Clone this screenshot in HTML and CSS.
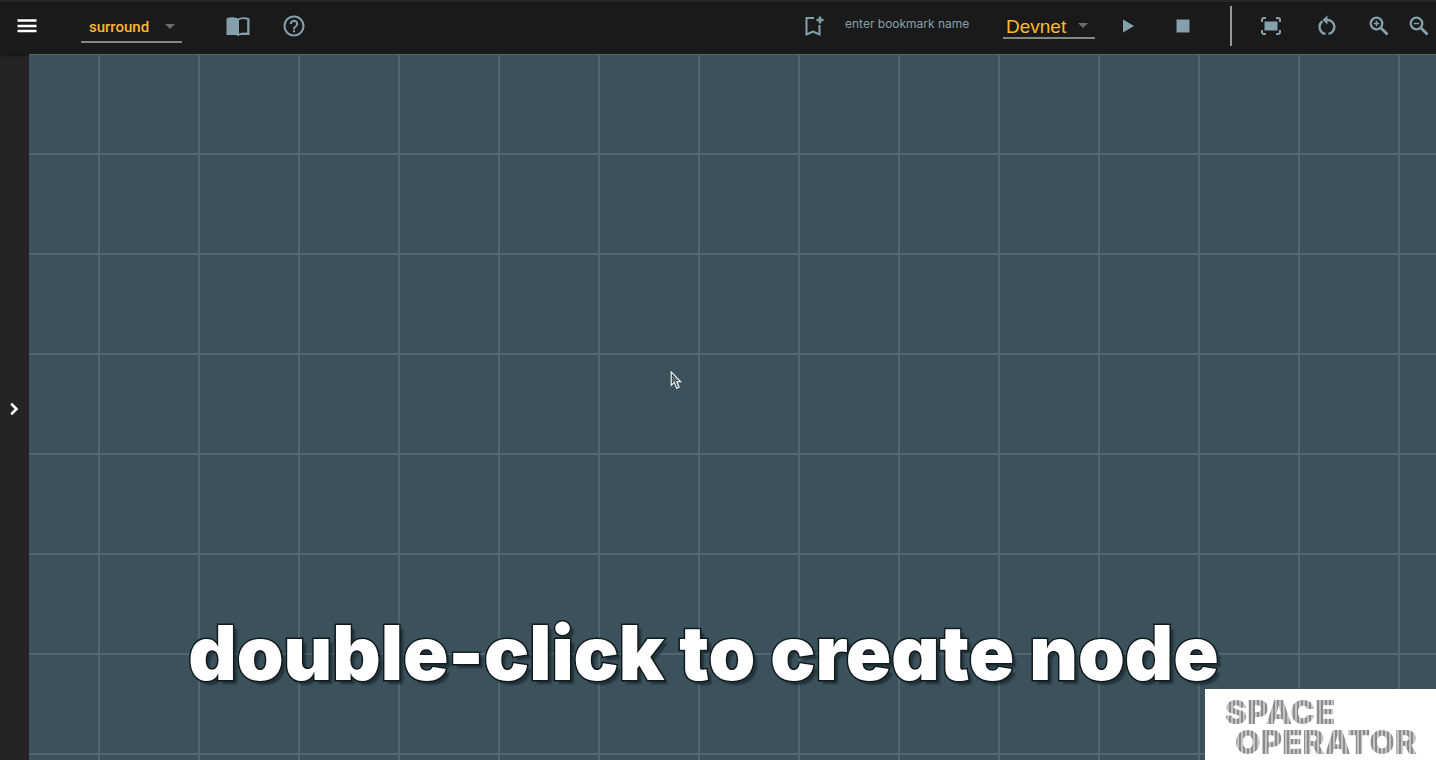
FILE: index.html
```
<!DOCTYPE html>
<html lang="en">
<head>
<meta charset="utf-8">
<title>Space Operator</title>
<link rel="stylesheet" href="styles.css">
</head>
<body>
<header class="toolbar">
  <div class="group group-left">
    <button class="icon menu" aria-label="Menu"><svg viewBox="0 0 24 24"><path d="M2.500 6.500h19M2.500 12h19M2.500 17h19" fill="none" stroke="currentColor" stroke-width="2.600"/></svg></button>
    <label class="pick pick-flow"><select aria-label="Flow"><option>surround</option></select></label>
    <button class="icon" aria-label="Documentation"><svg viewBox="0 0 24 24"><path fill-rule="evenodd" d="M0.500 4.500Q6 1.800 12 4.500Q18 1.800 23.500 4.500V21H15Q13 21 12 22Q11 21 9 21H.5ZM13 6V19.500Q17 17.800 21.200 18.800V5.700Q17 4.200 13 6Z"/></svg></button>
    <button class="icon" aria-label="Help"><svg viewBox="0 0 24 24"><path transform="translate(-.6 -.6) scale(1.050)" d="M11 18h2v-2h-2v2zm1-16C6.480 2 2 6.480 2 12s4.480 10 10 10 10-4.480 10-10S17.520 2 12 2zm0 18c-4.410 0-8-3.590-8-8s3.590-8 8-8 8 3.590 8 8-3.590 8-8 8zm0-14c-2.210 0-4 1.790-4 4h2c0-1.100.9-2 2-2s2 .9 2 2c0 2-3 1.750-3 5h2c0-2.250 3-2.500 3-5 0-2.210-1.790-4-4-4z"/></svg></button>
  </div>
  <div class="group group-right">
    <button class="icon" aria-label="Add bookmark"><svg viewBox="0 0 24 24"><path d="M13 4H5.500V20.500L12 17.500L18.500 20.500V11" fill="none" stroke="currentColor" stroke-width="2"/><path d="M17.800 2.500h2.400v2.300h2.300v2.400h-2.300v2.300h-2.400V7.200h-2.300V4.800h2.300z"/></svg></button>
    <input class="bookmark" type="text" placeholder="enter bookmark name" aria-label="Bookmark name">
    <label class="pick pick-net"><select aria-label="Network"><option>Devnet</option></select></label>
    <button class="icon play" aria-label="Run"><svg viewBox="0 0 24 24"><path d="M8 5.500v13l11-6.500z"/></svg></button>
    <button class="icon stop" aria-label="Stop"><svg viewBox="0 0 24 24"><path d="M5.500 5.500h13v13h-13z"/></svg></button>
    <span class="divider"></span>
    <button class="icon fit" aria-label="Fit to screen"><svg viewBox="0 0 24 24"><path d="M5.500 7.500h13v9h-13z"/><path d="M3 8V6q0-2 2-2h2M17 4h2q2 0 2 2v2M21 16v2q0 2-2 2h-2M7 20H5q-2 0-2-2v-2" fill="none" stroke="currentColor" stroke-width="2"/></svg></button>
    <button class="icon reset" aria-label="Reset rotation"><svg viewBox="0 0 24 24"><path d="M7.500 7.300A7 7 0 0 0 10.500 19.900M13.500 19.900A7 7 0 0 0 12 6" fill="none" stroke="currentColor" stroke-width="2.400"/><path d="M12.500 1.500v9L7.500 6z"/></svg></button>
    <button class="icon zoom-in" aria-label="Zoom in"><svg viewBox="0 0 24 24"><circle cx="9.500" cy="9.500" r="5.800" fill="none" stroke="currentColor" stroke-width="2.300"/><path d="M14 14l6.500 6.500" stroke="currentColor" stroke-width="2.800"/><path d="M6.800 9.500h5.400M9.500 6.800v5.400" stroke="currentColor" stroke-width="1.500"/></svg></button>
    <button class="icon zoom-out" aria-label="Zoom out"><svg viewBox="0 0 24 24"><circle cx="9.500" cy="9.500" r="5.800" fill="none" stroke="currentColor" stroke-width="2.300"/><path d="M14 14l6.500 6.500" stroke="currentColor" stroke-width="2.800"/><path d="M6.800 9.500h5.400" stroke="currentColor" stroke-width="1.500"/></svg></button>
  </div>
</header>
<div class="workspace">
  <aside class="rail"><button class="expand" aria-label="Open panel"><svg viewBox="0 0 12 12"><path d="M3 1.500L7.500 6L3 10.500" fill="none" stroke="currentColor" stroke-width="2.600" stroke-linecap="round"/></svg></button></aside>
  <main class="canvas">
    <svg class="cursor" viewBox="0 0 12 20"><path d="M1 1V15L4.300 12L6.600 18L9.300 17L6.900 11.300H11Z" fill="#253238" stroke="#e8eeee" stroke-width="1.300"/><path d="M3 6v5M5 8v4M7 13l1 3M5 7l3 3" stroke="#fff" stroke-dasharray="1 1"/></svg>
    <p class="caption">double-click to create node</p>
    <div class="brand"><span class="brand-top">SPACE</span><span class="brand-bottom">OPERATOR</span></div>
  </main>
</div>
</body>
</html>
```
FILE: styles.css
```
* { box-sizing: border-box; }
body {
  margin: 0;
  min-height: 100vh;
  display: flex;
  flex-direction: column;
  font-family: Inter, "Liberation Sans", sans-serif;
  background: #3b525c;
  overflow: hidden;
}
button, input, select { font: inherit; border: 0; padding: 0; margin: 0; background: none; color: inherit; outline: 0; }

.toolbar {
  position: relative;
  display: flex;
  justify-content: space-between;
  height: 54px;
  border-top: 2px solid #262626;
  background: #1a1a1a;
  color: #84a0ac;
  box-shadow: 0 1px 3px rgba(0, 0, 0, .6);
}
.group { display: flex; align-items: center; padding-bottom: 4px; }
.group-left { padding-left: 15px; }
.group-right { padding-right: 5px; }
.icon { width: 24px; height: 24px; flex: none; }
.icon svg { display: block; width: 24px; height: 24px; fill: currentColor; }
.icon + .icon { margin-left: 32px; }
.menu { color: #fff; }

.pick { position: relative; display: block; color: #ffb92e; }
.pick select { appearance: none; display: block; width: 100%; padding-top: 2px; border-bottom: 2px solid #858585; }
.pick::after {
  content: "";
  position: absolute;
  right: 7px;
  top: 50%;
  margin-top: -3px;
  border: 5px solid transparent;
  border-top-color: #6c6c6c;
  border-bottom: 0;
}
.pick-flow { width: 101px; margin: 2px 44px 0 42px; font-family: Roboto, sans-serif; font-size: 15px; font-weight: 500; }
.pick-flow select { height: 32px; padding-left: 8px; }
.pick-net { width: 92px; margin: 0 20px 0 16px; font-family: "Liberation Sans", sans-serif; font-size: 19px; }
.pick-net select { height: 26px; padding-left: 3px; }

.bookmark { width: 142px; height: 24px; margin-left: 20px; padding-bottom: 6px; font-size: 12px; }
.bookmark::placeholder { color: #84a0ac; opacity: 1; }
.divider { width: 2px; height: 40px; margin: 0 27px 0 35px; background: #979797; }
.icon.zoom-in { margin-left: 28px; }
.icon.zoom-out { margin-left: 16px; }

.workspace { display: flex; flex: 1; }
.rail { display: flex; align-items: center; justify-content: center; width: 29px; padding-top: 4px; background: #242424; }
.expand { width: 12px; height: 12px; color: #fff; }
.expand svg { display: block; width: 12px; height: 12px; }

.canvas {
  position: relative;
  flex: 1;
  background-color: #3b525c;
  background-image:
    linear-gradient(90deg, #50676f 2px, transparent 2px),
    linear-gradient(#50676f 2px, transparent 2px);
  background-size: 100px 100px;
  background-position: 69px 99px;
}
.cursor { position: absolute; left: 641px; top: 317px; width: 12px; height: 19px; }
.caption {
  position: absolute;
  left: 0;
  right: 58px;
  bottom: 62px;
  margin: 0;
  text-align: center;
  white-space: nowrap;
  font-size: 75px;
  line-height: 90px;
  font-weight: 900;
  font-feature-settings: "cv11";
  color: #fff;
  -webkit-text-stroke: 3px #10191d;
  paint-order: stroke fill;
  text-shadow: 4px 4px 2px rgba(20, 30, 34, .6);
}
.brand {
  position: absolute;
  right: 0;
  bottom: 0;
  display: flex;
  flex-direction: column;
  width: 231px;
  height: 71px;
  padding: 8px 0 0 20px;
  background: #fff;
  font-size: 33px;
  font-weight: 900;
  line-height: 30px;
}
.brand span {
  color: transparent;
  background: repeating-linear-gradient(90deg, #8c8c8c 0 2px, #c4c4c4 2px 4px);
  -webkit-background-clip: text;
  background-clip: text;
}
.brand .brand-bottom { margin-left: 10px; }
```
